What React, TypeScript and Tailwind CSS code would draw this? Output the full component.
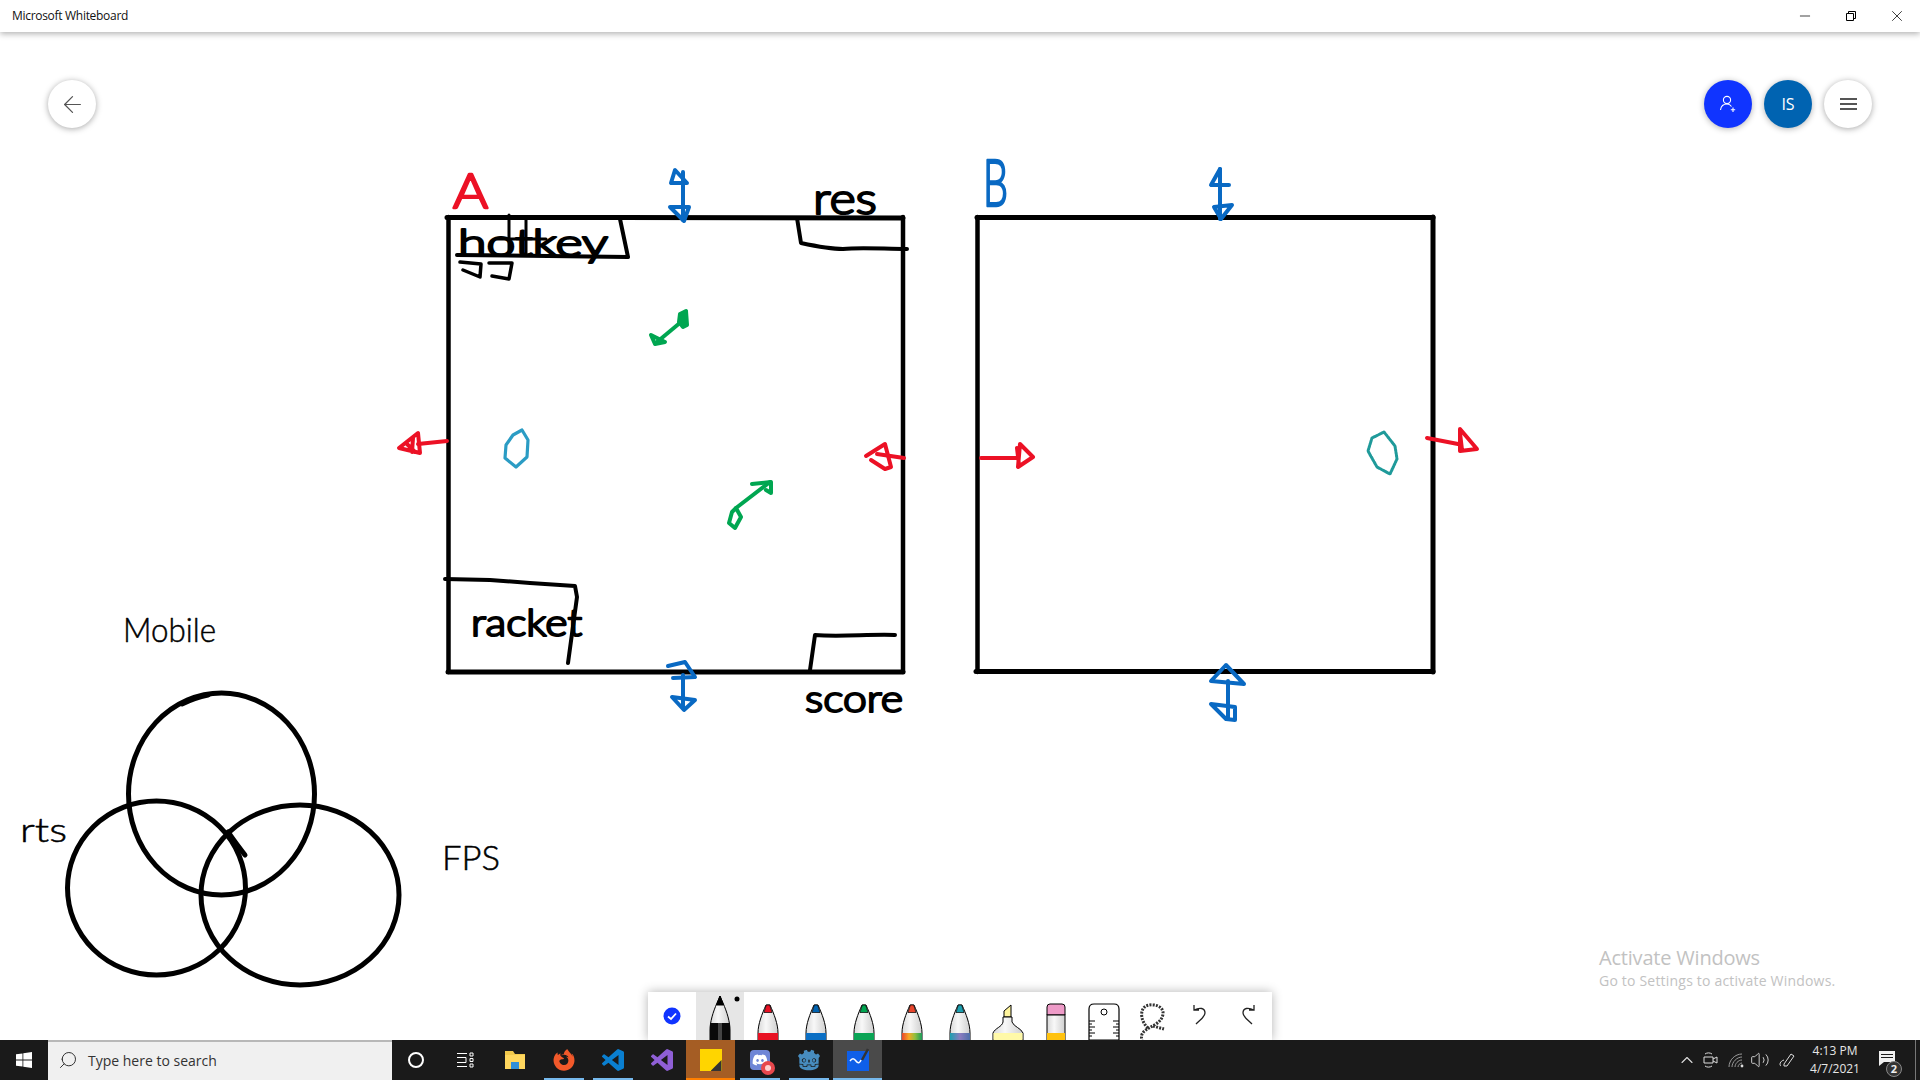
import { ArrowLeft, ChevronUp, Minus, Search, Volume2, X } from "lucide-react";
import { FaDiscord, FaFirefoxBrowser } from "react-icons/fa";
import { SiGodotengine } from "react-icons/si";

const VS_PATH =
  "M23.15 2.587L18.21.21a1.494 1.494 0 0 0-1.705.29l-9.46 8.63-4.12-3.128a.999.999 0 0 0-1.276.057L.327 7.261A1 1 0 0 0 .326 8.74L3.899 12 .326 15.26a1 1 0 0 0 .001 1.479L1.65 17.94a.999.999 0 0 0 1.276.057l4.12-3.128 9.46 8.63a1.492 1.492 0 0 0 1.704.29l4.942-2.377A1.5 1.5 0 0 0 24 20.06V3.939a1.5 1.5 0 0 0-.85-1.352zm-5.146 14.861L10.826 12l7.178-5.448v10.896z";

const Ink = () => (
  <svg
    className="absolute top-0 left-0 w-[1920px] h-[1008px]"
    viewBox="0 32 1920 1008"
    fill="none"
    strokeLinecap="round"
    strokeLinejoin="round"
  >
    <defs>
      <linearGradient id="body">
        <stop offset="0" stopColor="#d8d8d8" />
        <stop offset="0.4" stopColor="#f8f8f8" />
        <stop offset="1" stopColor="#cfcfcf" />
      </linearGradient>
      <linearGradient id="rainbow">
        <stop offset="0" stopColor="#e8452c" />
        <stop offset="0.35" stopColor="#f7a823" />
        <stop offset="0.65" stopColor="#8fbf3f" />
        <stop offset="1" stopColor="#1c9a5b" />
      </linearGradient>
      <linearGradient id="galaxy">
        <stop offset="0" stopColor="#1c9fb0" />
        <stop offset="0.5" stopColor="#8b7cc0" />
        <stop offset="1" stopColor="#4d6fa8" />
      </linearGradient>
    </defs>

    {/* board A */}
    <g stroke="#000" strokeWidth="4.5">
      <path d="M447 217.5H620L903 218" strokeWidth="5" />
      <path d="M448.5 217V672" />
      <path d="M903 217V672" />
      <path d="M448 672H903" strokeWidth="5" />
      <path d="M620 219L628 257L457 255" strokeWidth="4" />
      <path d="M460 262L481 264L480 277L463 270 M489 263L512 263L509 279L492 276" strokeWidth="3.5" />
      <path d="M509 215V255 M526 220V255 M497 239H546" strokeWidth="3" />
      <path d="M797 218L801 243C815 246 830 249 843 249C860 247 885 249 907 249" strokeWidth="4" />
      <path d="M445 579L490 580L530 583L575 586L577 597L568 663" strokeWidth="4" />
      <path d="M810 670L815 635C840 637 870 634 895 635" strokeWidth="4" />
    </g>

    {/* board B */}
    <g stroke="#000" strokeWidth="4.5">
      <path d="M977 217.5H1433" strokeWidth="5" />
      <path d="M977.5 217V672" strokeWidth="4.5" />
      <path d="M1433 217V672" strokeWidth="5" />
      <path d="M976 671.5H1433" strokeWidth="5" />
    </g>

    {/* red arrows */}
    <g stroke="#ec1125" strokeWidth="4">
      <path d="M447 441L418 444" />
      <path d="M399 448L418 433L420 453Z M413 438L412 452 M407 444L415 452" />
      <path d="M904 458L877 454" />
      <path d="M866 456L885 444L891 467L885 469L871 460" />
      <path d="M981 458H1017" />
      <path d="M1020 444L1033 457L1018 467Z M1017 448L1019 465" />
      <path d="M1427 438L1458 444" />
      <path d="M1460 429L1477 449L1460 451Z M1460 433L1462 450" />
    </g>

    {/* blue arrows */}
    <g stroke="#0969c3" strokeWidth="4">
      <path d="M683 172V220" />
      <path d="M675 170L671 183L687 183Z" />
      <path d="M670 207L689 207L684 221Z" />
      <path d="M683 675V707" />
      <path d="M668 666L685 662L695 677L673 678" />
      <path d="M672 697L695 700L684 710Z" />
      <path d="M1220 169V219" />
      <path d="M1220 169L1211 185L1229 185" />
      <path d="M1214 207L1232 205L1221 219Z" />
      <path d="M1228 681V719" />
      <path d="M1226 665L1211 681L1244 684Z" />
      <path d="M1211 704L1235 707L1235 720L1226 719Z" />
    </g>

    {/* green arrows */}
    <g stroke="#00a651" strokeWidth="4">
      <path d="M681 322L657 342" />
      <path d="M680 314L686 311L687 325L683 327L679 322Z" fill="#00a651" />
      <path d="M651 335L655 344L665 342Z" />
      <path d="M736 508L770 482" />
      <path d="M752 484L771 482L771 493L766 490" />
      <path d="M736 508L741 517L735 528L729 523L732 512Z" />
    </g>

    {/* spawn points */}
    <path d="M522 430L528 440L527 457L516 467L505 458L506 445L513 435Z" stroke="#2b9cc4" strokeWidth="3.2" />
    <path d="M1384 432L1395 446L1397 459L1390 474L1377 467L1368 451L1372 438Z" stroke="#1f9a9a" strokeWidth="3" strokeDasharray="2 1" />

    {/* venn */}
    <g stroke="#000" strokeWidth="5">
      <ellipse cx="221.5" cy="794" rx="93" ry="101" />
      <ellipse cx="156.5" cy="888" rx="89" ry="87" />
      <ellipse cx="300" cy="895" rx="99" ry="90" />
      <path d="M182 704C190 700 198 697 208 695" />
      <path d="M228 832C235 842 241 850 245 855" strokeWidth="5" />
    </g>

    {/* ink words */}
    <g className="font-['Lato',sans-serif] font-light" fill="#000" stroke="#000" strokeWidth="0.5">
      <text x="123" y="642" fontSize="34" textLength="93" lengthAdjust="spacingAndGlyphs">Mobile</text>
      <text x="20" y="842" fontSize="34" textLength="47" lengthAdjust="spacingAndGlyphs">rts</text>
      <text x="442" y="870" fontSize="34" textLength="58" lengthAdjust="spacingAndGlyphs">FPS</text>
    </g>
    <g className="font-['Lato',sans-serif] font-light" fill="#000" stroke="#000" strokeWidth="2.2">
      <text x="458" y="256" fontSize="37" textLength="150" lengthAdjust="spacingAndGlyphs">hotkey</text>
      <text x="813" y="214" fontSize="44" textLength="64" lengthAdjust="spacingAndGlyphs">res</text>
      <text x="471" y="636" fontSize="38" textLength="111" lengthAdjust="spacingAndGlyphs">racket</text>
      <text x="805" y="712" fontSize="38" textLength="98" lengthAdjust="spacingAndGlyphs">score</text>
    </g>
    <text x="453" y="208" fontSize="48" textLength="35" lengthAdjust="spacingAndGlyphs" className="font-['Lato',sans-serif] font-light" fill="#ec1125" stroke="#ec1125" strokeWidth="2.5">A</text>
    <text x="983" y="206" fontSize="66" textLength="25" lengthAdjust="spacingAndGlyphs" className="font-['Lato',sans-serif] font-light" fill="#0969c3" stroke="#0969c3" strokeWidth="2.5">B</text>
  </svg>
);

const Pen = ({ tip, band }: { tip: string; band: string }) => (
  <svg width="48" height="48" viewBox="0 0 48 48">
    <path d="M22 13H26C30 22 34 32 34 41V48H14V41C14 32 18 22 22 13Z" fill="url(#body)" stroke="#000" strokeWidth="1" />
    <path d="M22.3 13H25.7L28 20.5H20Z" fill={tip} stroke="#000" strokeWidth="0.7" />
    <rect x="14" y="41" width="20" height="7" fill={band} />
  </svg>
);

const ToolBar = () => (
  <div className="absolute bottom-0 left-[648px] flex w-[624px] h-12 bg-white shadow-[0_0_10px_rgba(0,0,0,0.3)]">
    <div className="w-12 h-12 flex items-center justify-center">
      <svg width="18" height="18" viewBox="0 0 18 18">
        <circle cx="9" cy="9" r="8.5" fill="#1034ff" />
        <path d="M5 9.5L8 12L13 6.5" fill="none" stroke="#fff" strokeWidth="1.8" />
      </svg>
    </div>
    <div className="w-12 h-12 bg-[#e6e6e6]">
      <svg width="48" height="48" viewBox="0 0 48 48">
        <path d="M21 11L24 4L27 11C31 20 34 30 34 38V48H14V38C14 30 17 20 21 11Z" fill="url(#body)" stroke="#000" strokeWidth="1" />
        <path d="M24 4L27.5 13H20.5Z" fill="#000" stroke="#000" />
        <rect x="14" y="31" width="20" height="17" fill="#0a0a0a" />
        <rect x="22" y="31" width="4" height="17" fill="#444" />
        <circle cx="41" cy="7" r="2.5" fill="#000" />
      </svg>
    </div>
    <Pen tip="#e81123" band="#e81123" />
    <Pen tip="#0063b1" band="#0b6fc4" />
    <Pen tip="#00a651" band="#0aa455" />
    <Pen tip="#e8452c" band="url(#rainbow)" />
    <Pen tip="#1c9fb0" band="url(#galaxy)" />
    <svg width="48" height="48" viewBox="0 0 48 48">
      <path d="M20 19L27 13V25H20Z" fill="#fff59d" stroke="#000" strokeWidth="1" />
      <path d="M19 25H28V30C30 35 37 36 39 41V48H9V41C11 36 18 35 19 30Z" fill="url(#body)" stroke="#000" strokeWidth="1" />
      <rect x="9.5" y="41" width="29" height="7" fill="#fff9a8" />
    </svg>
    <svg width="48" height="48" viewBox="0 0 48 48">
      <path d="M15 23V15Q15 12 18 12H30Q33 12 33 15V23Z" fill="#ee9bc8" stroke="#000" strokeWidth="1" />
      <rect x="15" y="23" width="18" height="25" fill="url(#body)" stroke="#000" strokeWidth="1" />
      <rect x="15" y="41" width="18" height="7" fill="#ffc20e" />
    </svg>
    <svg width="48" height="48" viewBox="0 0 48 48">
      <path d="M9 48V17Q9 12 14 12H34Q39 12 39 17V48Z" fill="#fff" stroke="#000" strokeWidth="1.2" />
      <circle cx="24" cy="20" r="3" fill="none" stroke="#000" strokeWidth="1" />
      <path d="M9 29H15M9 32H12M9 35H15M9 38H12M9 41H15M9 44H12M39 29H33M39 32H36M39 35H33M39 38H36M39 41H33M39 44H36" stroke="#000" strokeWidth="1" />
    </svg>
    <svg width="48" height="48" viewBox="0 0 48 48" fill="none">
      <path d="M20 36C13 30 11 18 18 14C25 11 36 14 35 22C34 30 26 33 21 36C16 39 12 42 14 48M25 34L36 37" stroke="#333" strokeWidth="3" strokeDasharray="2 1.2" />
    </svg>
    <svg width="48" height="48" viewBox="0 0 48 48" fill="none" stroke="#222" strokeWidth="1.3">
      <path d="M20 32C24 28 29 25 29 21C29 16 24 15 18 18M18 13V18H23" />
    </svg>
    <svg width="48" height="48" viewBox="0 0 48 48" fill="none" stroke="#222" strokeWidth="1.3">
      <path d="M28 32C24 28 19 25 19 21C19 16 24 15 30 18M30 13V18H25" />
    </svg>
  </div>
);

const TaskIcon = ({
  children,
  line,
  cell,
}: {
  children: React.ReactNode;
  line?: string;
  cell?: string;
}) => (
  <div className={`relative w-[49px] h-10 flex items-center justify-center ${cell ?? ""}`}>
    {children}
    {line && <div className={`absolute bottom-0 h-[2px] ${line}`} />}
  </div>
);

const TaskBar = () => (
  <div className="h-10 bg-[#1a1a1a] flex items-center text-white relative z-10">
    <div className="w-12 h-10 flex items-center justify-center">
      <svg width="16" height="16" viewBox="0 0 16 16" fill="#fff">
        <path d="M0 2.3L6.5 1.4V7.6H0ZM7.3 1.3L16 0V7.6H7.3ZM0 8.4H6.5V14.6L0 13.7ZM7.3 8.4H16V16L7.3 14.7Z" />
      </svg>
    </div>
    <div className="w-[344px] h-10 bg-[#f0f0f0] border-t-2 border-[#b8b8b8] flex items-center pl-[10px] pb-[2px] text-[#333] text-[14px] font-['Open_Sans',sans-serif]">
      <Search className="w-5 h-5 -scale-x-100 mr-[10px]" strokeWidth={1.2} />
      <span>Type here to search</span>
    </div>
    <div className="w-12 h-10 flex items-center justify-center">
      <div className="w-4 h-4 rounded-full border-2 border-white" />
    </div>
    <div className="w-[50px] h-10 flex items-center justify-center">
      <svg width="17" height="16" viewBox="0 0 17 16" fill="none" stroke="#fff" strokeWidth="1">
        <path d="M0 1.5H10M0 14.5H10M0 5.5H9V10.5H0M13 1H16V4H13ZM13 6.5H16V9.5H13ZM13 12H16V15H13Z" />
      </svg>
    </div>
    <TaskIcon>
      <svg width="22" height="20" viewBox="0 0 22 20">
        <path d="M1 1H9L11 4H21V19H1Z" fill="#f2c94c" />
        <rect x="1" y="5" width="20" height="14" fill="#ffd75e" />
        <rect x="7" y="12" width="8" height="7" fill="#2f8fd8" />
      </svg>
    </TaskIcon>
    <TaskIcon line="w-10 bg-[#76b9ed]">
      <FaFirefoxBrowser className="w-[22px] h-[22px] text-[#f2592a]" />
    </TaskIcon>
    <TaskIcon line="w-10 bg-[#76b9ed]">
      <svg width="22" height="22" viewBox="0 0 24 24" fill="#0a7fd0"><path d={VS_PATH} /></svg>
    </TaskIcon>
    <TaskIcon>
      <svg width="22" height="22" viewBox="0 0 24 24" fill="#8f5fd6"><path d={VS_PATH} /></svg>
    </TaskIcon>
    <TaskIcon cell="bg-[#a55d24]" line="w-full bg-[#ff7f00]">
      <div className="relative w-[22px] h-[22px] bg-[#ffd500]">
        <div className="absolute bottom-0 right-0 w-[11px] h-[11px] bg-[#333] [clip-path:polygon(100%_0,100%_100%,0_100%,0_100%)]" />
      </div>
    </TaskIcon>
    <TaskIcon line="w-10 bg-[#76b9ed]">
      <div className="relative w-5 h-5 rounded bg-[#6f86d6] flex items-center justify-center">
        <FaDiscord className="w-4 h-4 text-white" />
        <div className="absolute -right-[5px] -bottom-[5px] w-[14px] h-[14px] rounded-full bg-[#e8474c] border-[3px] border-[#e8474c] flex items-center justify-center">
          <div className="w-[6px] h-[6px] rounded-full bg-[#ffd0d0]" />
        </div>
      </div>
    </TaskIcon>
    <TaskIcon line="w-10 bg-[#76b9ed]">
      <SiGodotengine className="w-[22px] h-[22px] text-[#478cbf]" />
    </TaskIcon>
    <TaskIcon cell="bg-[#4a4a4a]" line="w-full bg-[#76b9ed]">
      <svg width="24" height="24" viewBox="0 0 24 24" fill="none">
        <rect x="1" y="3" width="22" height="20" fill="#0f5fe8" />
        <path d="M4 13C6 10 8 10 10 13C12 16 14 15 15 12" stroke="#fff" strokeWidth="1.5" />
        <path d="M16 12L22 1" stroke="#333" strokeWidth="2.5" />
      </svg>
    </TaskIcon>

    <div className="ml-auto flex items-center h-10">
      <ChevronUp className="w-5 h-5 text-[#ddd] mr-[5px]" strokeWidth={1.3} />
      <svg width="18" height="18" viewBox="0 0 18 18" fill="none" stroke="#ddd" strokeWidth="1" className="mr-[7px]">
        <path d="M2 6H11V12H2ZM11 8L15 6V12L11 10M3 3C5 1.5 8 1.5 10 3M3 15C5 16.5 8 16.5 10 15" />
      </svg>
      <svg width="18" height="16" viewBox="0 0 18 16" fill="none" stroke="#999" strokeWidth="1" className="mr-[5px]">
        <path d="M2 15C2 8 8 2 15 2M5 15C5 10 10 5 15 5M8 15C8 12 11 8 15 8M11 15C11 13 13 11 15 11" />
        <circle cx="15" cy="14" r="1.4" fill="#ddd" stroke="none" />
      </svg>
      <Volume2 className="w-5 h-5 text-[#ddd] mr-[8px]" strokeWidth={1.1} />
      <svg width="18" height="18" viewBox="0 0 18 18" fill="none" stroke="#ddd" strokeWidth="1">
        <path d="M6 13L13 3L16 5L9 15L6 15ZM6 9C2 10 1 14 3 15" />
      </svg>
      <div className="w-[68px] ml-[5px] flex flex-col items-center text-[12px] leading-[18px] text-[#e6e6e6] font-['Open_Sans',sans-serif]">
        <span>4:13 PM</span>
        <span>4/7/2021</span>
      </div>
      <div className="relative w-[46px] h-10 flex items-center pl-[10px]">
        <svg width="16" height="15" viewBox="0 0 16 15" fill="#f0f0f0" className="-mt-1">
          <path d="M0 0H16V11H5L0 15ZM2 3V4H14V3ZM2 6V7H14V6Z" fillRule="evenodd" />
        </svg>
        <div className="absolute right-[13px] bottom-[3px] w-[16px] h-[16px] rounded-full bg-[#333] border border-[#888] flex items-center justify-center text-[11px] font-bold text-[#eee] font-['Open_Sans',sans-serif]">
          2
        </div>
      </div>
      <div className="w-[5px] h-10 border-l border-[#777]" />
    </div>
  </div>
);

export default function App() {
  return (
    <div className="w-[1920px] h-[1080px] flex flex-col overflow-hidden bg-white font-['Open_Sans',sans-serif]">
      <div className="relative z-10 h-8 flex items-center justify-between bg-white shadow-[0_2px_6px_rgba(0,0,0,0.3)]">
        <span className="pl-3 text-[12px] text-[#111] tracking-[-0.3px]">Microsoft Whiteboard</span>
        <div className="flex items-center">
          <div className="w-[46px] flex justify-center"><Minus className="w-4 h-4 text-black" strokeWidth={1.1} /></div>
          <div className="w-[46px] flex justify-center">
            <svg width="10" height="10" viewBox="0 0 10 10" fill="none" stroke="#000" strokeWidth="1">
              <path d="M.5 2.5H7.5V9.5H.5ZM2.5 2.5V.5H9.5V7.5H7.5" />
            </svg>
          </div>
          <div className="w-[46px] flex justify-center"><X className="w-[18px] h-[18px] text-black" strokeWidth={1} /></div>
        </div>
      </div>

      <div className="relative flex-1">
        <Ink />
        <div className="relative flex justify-between px-12 pt-12">
          <div className="w-12 h-12 rounded-full bg-white shadow-[0_1px_6px_rgba(0,0,0,0.35)] flex items-center justify-center">
            <ArrowLeft className="w-[27px] h-[27px] text-[#555]" strokeWidth={1.1} />
          </div>
          <div className="flex gap-3">
            <div className="w-12 h-12 rounded-full bg-[#1034ff] shadow-[0_1px_6px_rgba(0,0,0,0.3)] flex items-center justify-center">
              <svg width="18" height="18" viewBox="0 0 18 18" fill="none" stroke="#fff" strokeWidth="1.1">
                <circle cx="8" cy="5" r="3.6" />
                <path d="M1.5 15C2 11 5 9 8 9C10 9 11.5 10 12.5 11.5M14 12.5V17M11.8 14.8H16.2" />
              </svg>
            </div>
            <div className="w-12 h-12 rounded-full bg-[#0063b1] shadow-[0_1px_6px_rgba(0,0,0,0.3)] flex items-center justify-center text-white text-[16px]">
              IS
            </div>
            <div className="w-12 h-12 rounded-full bg-white shadow-[0_1px_6px_rgba(0,0,0,0.35)] flex items-center justify-center">
              <svg width="17" height="12" viewBox="0 0 17 12" fill="none" stroke="#555" strokeWidth="2">
                <path d="M0 1H17M0 6H17M0 11H17" />
              </svg>
            </div>
          </div>
        </div>

        <div className="absolute left-[1599px] top-[912px] text-[#c2c2c2]">
          <div className="text-[20px] leading-[27px] tracking-[-0.2px]">Activate Windows</div>
          <div className="text-[14px] leading-[20px] tracking-[0.2px]">Go to Settings to activate Windows.</div>
        </div>

        <ToolBar />
      </div>

      <TaskBar />
    </div>
  );
}
